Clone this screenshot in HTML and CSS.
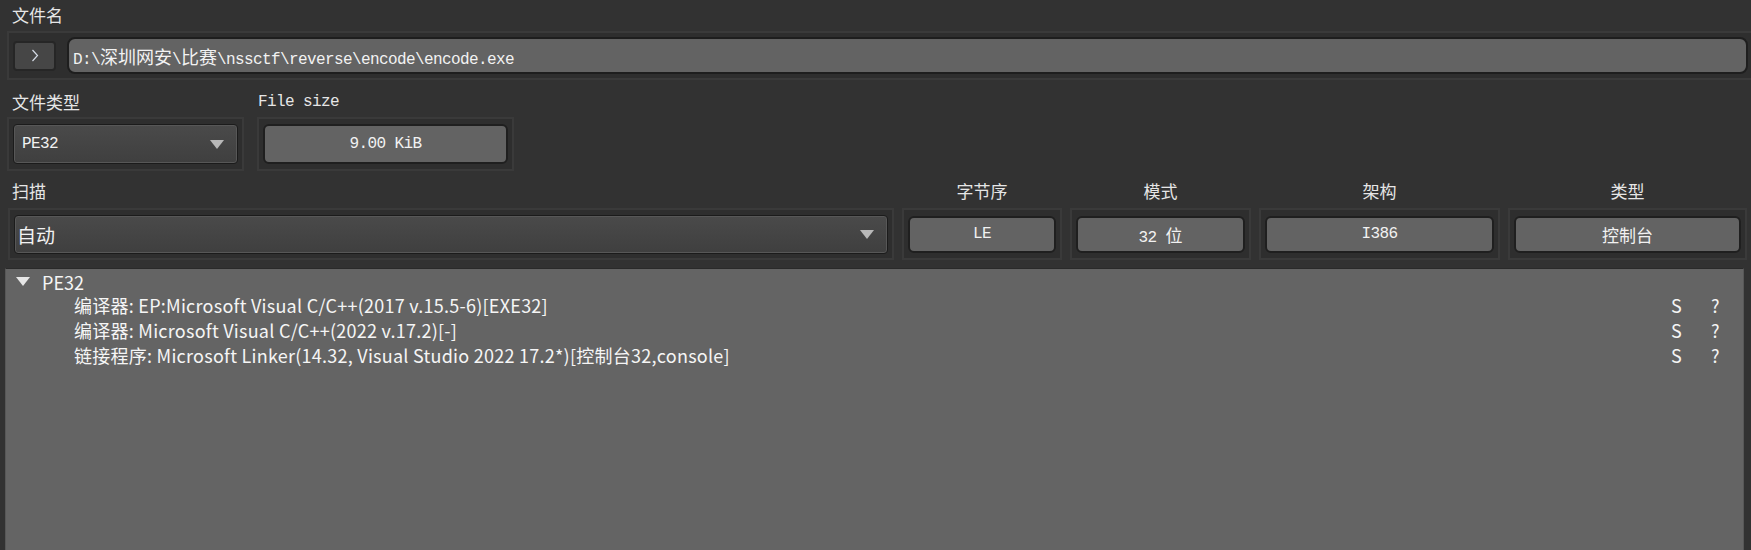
FILE: index.html
```html
<!DOCTYPE html>
<html lang="zh-CN">
<head>
<meta charset="utf-8">
<title>Detect It Easy</title>
<link rel="stylesheet" href="styles.css">
</head>
<body>
<div class="app">
  <div class="lbl lbl-top">文件名</div>
  <div class="frame frame-file">
    <div class="go">
      <svg width="8" height="13" viewBox="0 0 8 13"><polyline points="1.5,1 6.5,6.5 1.5,12" fill="none" stroke="#d4dbe6" stroke-width="1.2"/></svg>
    </div>
    <div class="path"><span>D:\<span class="cjk">深圳网安</span>\<span class="cjk">比赛</span>\nssctf\reverse\encode\encode.exe</span></div>
  </div>

  <div class="row2">
    <div class="col col-type">
      <div class="lbl lbl-mid">文件类型</div>
      <div class="frame frame-mid">
        <div class="combo combo-type"><span class="mono">PE32</span><span class="arrow"></span></div>
      </div>
    </div>
    <div class="col col-size">
      <div class="lbl lbl-mid lbl-mono">File size</div>
      <div class="frame frame-mid">
        <div class="btn btn-size"><span class="mono">9.00 KiB</span></div>
      </div>
    </div>
  </div>

  <div class="row3">
    <div class="col">
      <div class="lbl lbl-bot lbl-left">扫描</div>
      <div class="frame frame-bot">
        <div class="combo combo-scan"><span class="cjk-ui">自动</span><span class="arrow"></span></div>
      </div>
    </div>
    <div class="col">
      <div class="lbl lbl-bot lbl-center">字节序</div>
      <div class="frame frame-bot"><div class="btn btn-bot"><span class="mono">LE</span></div></div>
    </div>
    <div class="col">
      <div class="lbl lbl-bot lbl-center">模式</div>
      <div class="frame frame-bot"><div class="btn btn-bot"><span class="mono">32 <span class="cjk">位</span></span></div></div>
    </div>
    <div class="col">
      <div class="lbl lbl-bot lbl-center">架构</div>
      <div class="frame frame-bot"><div class="btn btn-bot"><span class="mono">I386</span></div></div>
    </div>
    <div class="col">
      <div class="lbl lbl-bot lbl-center">类型</div>
      <div class="frame frame-bot"><div class="btn btn-bot"><span class="cjk">控制台</span></div></div>
    </div>
  </div>

  <div class="tree">
    <div class="tree-root"><span class="twisty"></span><span>PE32</span></div>
    <div class="tree-row"><span>编译器: EP:Microsoft Visual C/C++(2017 v.15.5-6)[EXE32]</span><span>S</span><span>?</span></div>
    <div class="tree-row"><span>编译器: Microsoft Visual C/C++(2022 v.17.2)[-]</span><span>S</span><span>?</span></div>
    <div class="tree-row"><span>链接程序: Microsoft Linker(14.32, Visual Studio 2022 17.2*)[控制台32,console]</span><span>S</span><span>?</span></div>
  </div>
</div>
</body>
</html>
```

FILE: styles.css
```css
html, body {
  margin: 0;
  padding: 0;
}

body {
  width: 1751px;
  height: 550px;
  overflow: hidden;
  background: #323232;
  color: #e8e8e8;
  font-family: "Noto Sans CJK SC", "Noto Sans", sans-serif;
}

.app {
  width: 1751px;
}

.mono {
  font-family: "Liberation Mono", "Noto Sans CJK SC", monospace;
  font-size: 16px;
  letter-spacing: -0.6px;
}

.cjk {
  font-family: "Noto Sans CJK SC", sans-serif;
  font-size: 17px;
  letter-spacing: 0;
}

.cjk-ui {
  font-family: "Noto Sans CJK SC", sans-serif;
  font-size: 19px;
}

/* labels */
.lbl {
  font-size: 17px;
  color: #e6e6e6;
  box-sizing: border-box;
  white-space: nowrap;
}

.lbl-top {
  height: 31px;
  line-height: 29px;
  padding-left: 12px;
}

.lbl-mid {
  height: 37px;
  line-height: 24px;
  padding-top: 10px;
  padding-left: 5px;
}

.lbl-mono {
  font-family: "Liberation Mono", monospace;
  font-size: 16px;
  letter-spacing: -0.6px;
  padding-left: 1px;
}

.lbl-bot {
  height: 37px;
  line-height: 24px;
  padding-top: 8px;
}

.lbl-left {
  padding-left: 4px;
}

.lbl-center {
  text-align: center;
}

/* group frames */
.frame {
  box-sizing: border-box;
  border: 2px solid #3a3a3a;
  background: #2e2e2e;
  display: flex;
  align-items: center;
  padding: 0 4px;
}

.frame-file {
  margin-left: 7px;
  width: 1760px;
  height: 49px;
  gap: 11px;
}

.frame-mid {
  height: 54px;
}

.frame-bot {
  height: 52px;
}

/* browse button */
.go {
  flex: none;
  box-sizing: border-box;
  width: 43px;
  height: 30px;
  border: 2px solid #262626;
  border-radius: 4px;
  background: #464646;
  display: flex;
  align-items: center;
  justify-content: center;
}

.path {
  flex: none;
  box-sizing: border-box;
  width: 1681px;
  height: 37px;
  border: 2px solid #1e1e1e;
  border-radius: 8px;
  background: #636363;
  padding-left: 4px;
  display: flex;
  align-items: center;
  white-space: nowrap;
  font-family: "Liberation Mono", monospace;
  font-size: 16px;
  letter-spacing: -0.6px;
  color: #f2f2f2;
}

.path .cjk {
  font-size: 18px;
}

/* rows */
.row2 {
  display: flex;
  gap: 13px;
  margin-left: 7px;
}

.col-type {
  width: 237px;
}

.col-size {
  width: 257px;
}

.row3 {
  display: grid;
  grid-template-columns: 886px 160px 181px 241px 239px;
  column-gap: 8px;
  margin-left: 8px;
}

/* combo boxes */
.combo {
  flex: 1;
  box-sizing: border-box;
  border: 1px solid #1b1b1b;
  border-radius: 4px;
  background: linear-gradient(#4a4a4a, #3f3f3f);
  box-shadow: inset 0 0 0 1px #575757;
  display: flex;
  align-items: center;
  justify-content: space-between;
  padding: 0 13px 0 8px;
  color: #f2f2f2;
}

.combo-type {
  height: 40px;
}

.combo-scan {
  height: 39px;
  padding-left: 2px;
}

.arrow {
  width: 0;
  height: 0;
  border-left: 7px solid transparent;
  border-right: 7px solid transparent;
  border-top: 9px solid #b8b8b8;
}

/* push buttons */
.btn {
  flex: 1;
  box-sizing: border-box;
  border: 2px solid #1f1f1f;
  border-radius: 6px;
  background: #636363;
  display: flex;
  align-items: center;
  justify-content: center;
  color: #f2f2f2;
  white-space: pre;
}

.btn-size {
  height: 40px;
}

.btn-bot {
  height: 37px;
}

/* result tree */
.tree {
  box-sizing: border-box;
  margin-top: 8px;
  margin-left: 5px;
  width: 1739px;
  height: 290px;
  background: #646464;
  border-left: 1px solid #575757;
  border-right: 1px solid #575757;
  border-top: 1px solid #2a2a2a;
  padding-top: 1px;
  font-size: 18px;
  color: #f5f5f5;
}

.tree-root {
  display: flex;
  align-items: center;
  gap: 12px;
  height: 23px;
  padding-left: 10px;
}

.twisty {
  width: 0;
  height: 0;
  border-left: 7.5px solid transparent;
  border-right: 7.5px solid transparent;
  border-top: 9px solid #e6e6e6;
}

.tree-row {
  display: grid;
  grid-template-columns: 1fr 40px 32px;
  height: 25px;
  line-height: 25px;
  padding-left: 68px;
  white-space: nowrap;
  letter-spacing: 0.25px;
}
```
